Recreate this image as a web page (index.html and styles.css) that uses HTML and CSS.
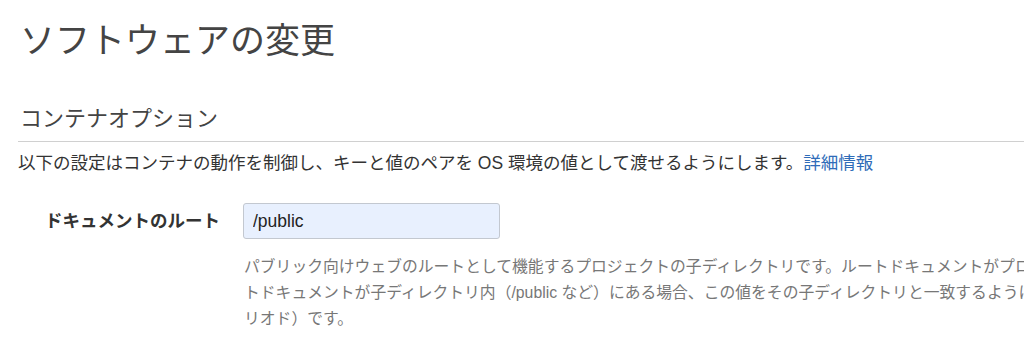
FILE: index.html
```html
<!DOCTYPE html>
<html lang="ja">
<head>
    <meta charset="UTF-8">
    <meta name="viewport" content="width=device-width, initial-scale=1.0">
    <link rel="stylesheet" href="styles.css">
    <title>ソフトウェアの変更</title>
</head>
<body>
    <div class="page">
        <h1 class="page-title">ソフトウェアの変更</h1>

        <section class="section">
            <h2 class="section-title">コンテナオプション</h2>
            <p class="section-desc">以下の設定はコンテナの動作を制御し、キーと値のペアを OS 環境の値として渡せるようにします。<a href="#" class="link">詳細情報</a></p>

            <div class="form-row">
                <label class="form-label" for="doc-root">ドキュメントのルート</label>
                <div class="form-field">
                    <input id="doc-root" class="text-input" type="text" value="/public">
                    <p class="help-text">パブリック向けウェブのルートとして機能するプロジェクトの子ディレクトリです。ルートドキュメントがプロジェクトディレクトリにある場合は、この値を空白にしておきます。ルー<br>トドキュメントが子ディレクトリ内（/public など）にある場合、この値をその子ディレクトリと一致するように設定します。デフォルト値は「.」（ピ<br>リオド）です。</p>
                </div>
            </div>
        </section>
    </div>
</body>
</html>
```

FILE: styles.css
```css
html, body {
    margin: 0;
    padding: 0;
    overflow: hidden;
}

body {
    font-family: "Liberation Sans", "Noto Sans CJK JP", sans-serif;
    color: #333;
    background-color: #fff;
    width: 1024px;
    height: 346px;
}

.page {
    padding: 21px 0 0 18px;
}

.page-title {
    margin: 0;
    font-size: 35px;
    line-height: 40px;
    font-weight: 400;
    color: #444;
    padding-left: 2px;
}

.section {
    margin-top: 44px;
}

.section-title {
    margin: 0;
    font-size: 22px;
    line-height: 28px;
    font-weight: 400;
    color: #444;
    padding: 0 0 8px 2px;
    border-bottom: 1px solid #d0d0d0;
    width: 1100px;
}

.section-desc {
    margin: 9px 0 0;
    font-size: 17.5px;
    line-height: 24px;
    color: #333;
    white-space: nowrap;
}

.link {
    color: #2f6cb8;
    text-decoration: none;
}

.form-row {
    display: grid;
    grid-template-columns: 202px auto;
    column-gap: 23px;
    margin-top: 28px;
}

.form-label {
    text-align: right;
    font-size: 17.5px;
    font-weight: bold;
    line-height: 36px;
    color: #333;
}

.text-input {
    display: block;
    box-sizing: border-box;
    width: 257px;
    height: 36px;
    padding: 0 9px;
    font-family: "Liberation Sans", sans-serif;
    font-size: 17.5px;
    color: #222;
    background-color: #e8f0fe;
    border: 1px solid #c3c8d0;
    border-radius: 3px;
    outline: none;
}

.help-text {
    margin: 15px 0 0 1px;
    font-size: 15.8px;
    line-height: 26px;
    color: #777;
    white-space: nowrap;
}
```
